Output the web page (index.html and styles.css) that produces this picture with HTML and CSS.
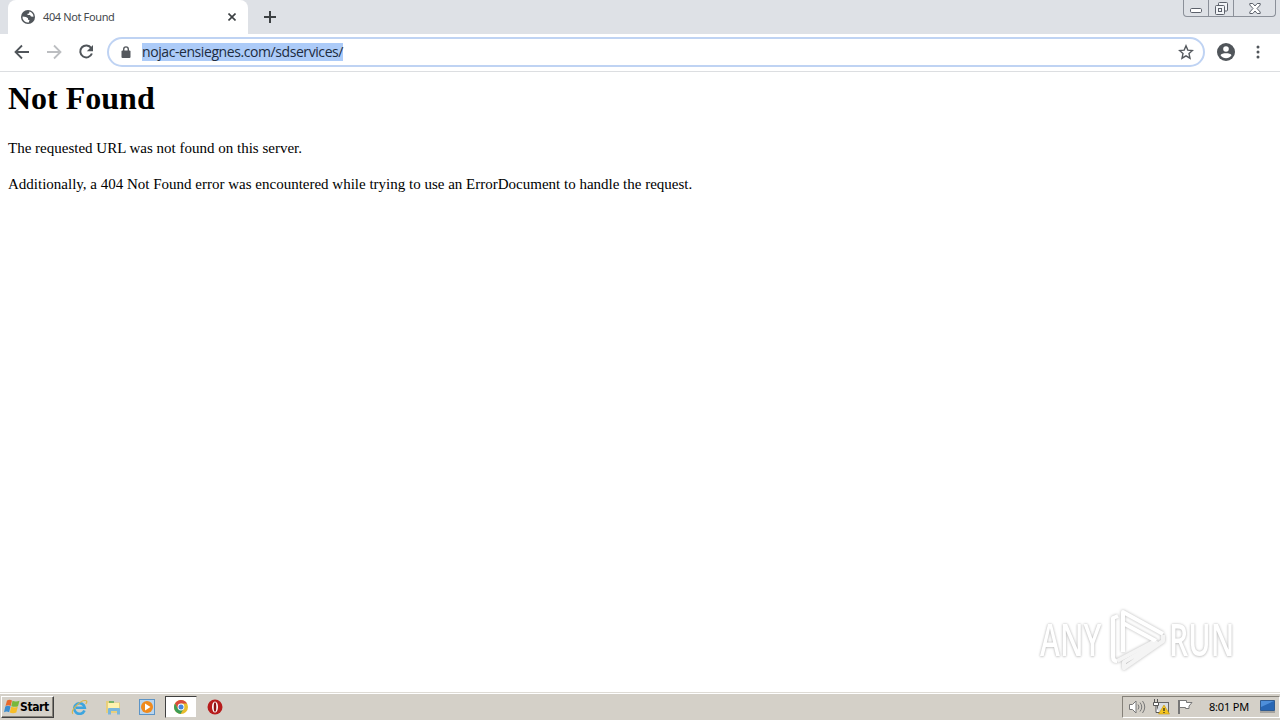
FILE: index.html
```html
<!DOCTYPE html>
<html lang="en">
<head>
    <meta charset="UTF-8">
    <title>404 Not Found</title>
    <link rel="stylesheet" href="styles.css">
</head>
<body>
    <div class="tabstrip">
        <div class="tab">
            <svg class="globe" width="14" height="14" viewBox="0 0 14 14">
                <circle cx="7" cy="7" r="7" fill="#50555a"/>
                <path d="M8.500 1.600Q12.300 2.800 12.500 6.700L10 6.500 9 5H6.500V3.800L8 3.400z" fill="#fff"/>
                <path d="M1.600 6.500L5 7l2 1.200v1.500L8.500 10l-.7 2.400Q3.500 12.900 1.600 8.500z" fill="#fff"/>
            </svg>
            <span class="tab-title">404 Not Found</span>
            <svg class="tab-close" width="8" height="8" viewBox="0 0 8 8"><path d="M.5.5l7 7M7.5.5l-7 7" stroke="#3c4043" stroke-width="1.6"/></svg>
        </div>
        <svg class="new-tab" width="12" height="12" viewBox="0 0 12 12"><path d="M6 0v12M0 6h12" stroke="#3c4043" stroke-width="2"/></svg>
        <div class="window-buttons">
            <span class="win-btn minimize"><svg width="12" height="5" viewBox="0 0 12 5"><rect x=".5" y=".5" width="11" height="4" rx="1.2" fill="#fff" stroke="#5c616b"/></svg></span>
            <span class="win-btn restore"><svg width="13" height="13" viewBox="0 0 13 13" fill="#f2f4f7" stroke="#5c616b"><rect x="3.5" y=".5" width="9" height="8.500" rx="1"/><rect x=".5" y="3.500" width="9" height="9" rx="1"/><rect x="3.500" y="6.500" width="3" height="3"/></svg></span>
            <span class="win-btn close"><svg width="12" height="11" viewBox="0 0 12 11"><path d="M.8.5h3L6 3 8.200.5h3v1.500L8 5.500l3.200 3.500v1.500h-3L6 8 3.800 10.500h-3V9L4 5.500.8 2z" fill="#fff" stroke="#5c616b"/></svg></span>
        </div>
    </div>

    <div class="toolbar">
        <svg class="nav" width="16" height="16" viewBox="0 0 16 16"><path d="M15 8H2M8 1.500L1.500 8 8 14.500" fill="none" stroke="#50555a" stroke-width="1.800"/></svg>
        <svg class="nav" width="16" height="16" viewBox="0 0 16 16"><path d="M1 8h13M8 1.500L14.500 8 8 14.500" fill="none" stroke="#bcbec1" stroke-width="1.800"/></svg>
        <svg class="nav" width="16" height="16" viewBox="0 0 16 16"><path d="M13.200 4A6 6 0 1 0 13.900 9.500" fill="none" stroke="#50555a" stroke-width="2"/><path d="M15 1v6.200H8.800z" fill="#50555a"/></svg>
        <div class="omnibox">
            <svg class="lock" width="10" height="12" viewBox="0 0 10 12"><path d="M2.700 5V3.200a2.300 2.300 0 0 1 4.600 0V5" fill="none" stroke="#55595e" stroke-width="1.400"/><rect x=".5" y="4.500" width="9" height="7.500" rx="1" fill="#55595e"/></svg>
            <span class="url">nojac-ensiegnes.com/sdservices/</span>
            <svg class="star" width="16" height="16" viewBox="0 0 16 16"><path d="M8 1.800l1.800 4.300 4.700.4-3.500 3.100 1 4.600L8 11.800l-4 2.400 1-4.600L1.500 6.500l4.700-.4z" fill="none" stroke="#55595e" stroke-width="1.400"/></svg>
        </div>
        <svg class="avatar" width="18" height="18" viewBox="0 0 18 18"><circle cx="9" cy="9" r="9" fill="#50555a"/><circle cx="9" cy="6" r="2.800" fill="#fff"/><path d="M3.500 12.300C4.500 9.700 13.500 9.700 14.500 12.300 12 16.300 6 16.300 3.500 12.300z" fill="#fff"/></svg>
        <svg class="menu" width="4" height="14" viewBox="0 0 4 14" fill="#50555a"><circle cx="2" cy="2" r="1.500"/><circle cx="2" cy="7" r="1.500"/><circle cx="2" cy="12" r="1.500"/></svg>
    </div>

    <div class="page">
        <h1>Not Found</h1>
        <p>The requested URL was not found on this server.</p>
        <p>Additionally, a 404 Not Found error was encountered while trying to use an ErrorDocument to handle the request.</p>

        <div class="watermark">
            <span class="word">ANY</span>
            <svg class="play" width="64" height="66" viewBox="0 0 64 66">
                <g fill="none" stroke-width="4" stroke-linejoin="round">
                    <path d="M13 10L8 12v39q0 4 4 4" stroke="#fff"/>
                    <path d="M12 55L50 35" stroke="#f4f4f4"/>
                    <path d="M18 46V6L58 28M18 17L51 35" stroke="#fff"/>
                    <path d="M58 29v6L19 62v-6l34-20" stroke="#f4f4f4"/>
                </g>
            </svg>
            <span class="word">RUN</span>
        </div>
    </div>

    <div class="taskbar">
        <div class="start">
            <svg width="16" height="15" viewBox="0 0 16 15">
                <path d="M3 1.500Q5.500 0 8 1.500L6.700 6.900Q4 5.700 1.500 7z" fill="#e8692c"/>
                <path d="M8.500 1.800Q12 3.200 15.500 1.700L14 7.200Q11 8.300 7.300 7.200z" fill="#78b83b"/>
                <path d="M1.300 7.500Q4 6.200 6.600 7.500L5.100 13.200Q2.500 12 0 13.300z" fill="#3b8dd0"/>
                <path d="M7.200 7.700Q10.400 9 13.800 7.800L12.300 13.500Q9 14.900 5.800 13.500z" fill="#f7bd27"/>
            </svg>
            <span>Start</span>
        </div>
        <div class="launchers">
            <span class="launcher">
                <svg width="17" height="16" viewBox="0 0 17 16"><path d="M13.500 11.500A5.300 5.300 0 1 1 13.800 8.700H5" fill="none" stroke="#3da5df" stroke-width="2.600"/><path d="M2 14.800C-1 12 9 1 14.500 1.500Q17 2 14.800 5" fill="none" stroke="#d9b74c" stroke-width="1.200"/></svg>
            </span>
            <span class="launcher">
                <svg width="17" height="16" viewBox="0 0 17 16"><path d="M1 2h5l1 1.500h8V14H1z" fill="#e8cf7c"/><path d="M3 4h11v7H3z" fill="#fff2ae"/><path d="M4 3h5" stroke="#54a858" stroke-width="1.500"/><path d="M3 15.500V10q0-1 1-1h10q1 0 1 1v5.500h-3V12H6v3.500z" fill="#79b6dc"/></svg>
            </span>
            <span class="launcher">
                <svg width="16" height="16" viewBox="0 0 16 16"><rect x=".5" y=".5" width="15" height="15" fill="#b9d5ee" stroke="#5c94c6"/><circle cx="8" cy="8" r="6" fill="#f08a1c"/><path d="M6 4.500v7L11.500 8z" fill="#fff"/></svg>
            </span>
            <span class="launcher active">
                <svg width="14" height="14" viewBox="0 0 14 14"><circle cx="7" cy="7" r="7" fill="#e8bd2d"/><path d="M1 3.500A7 7 0 0 1 13 3.500H7L4 9z" fill="#d94b3c"/><path d="M1 3.500A7 7 0 0 0 6.500 14L9.500 9 4 9z" fill="#3c9c56"/><circle cx="7" cy="7" r="3.400" fill="#fff"/><circle cx="7" cy="7" r="2.500" fill="#4585dc"/></svg>
            </span>
            <span class="launcher">
                <svg width="16" height="16" viewBox="0 0 16 16"><circle cx="8" cy="8" r="7.500" fill="#b71c1c"/><ellipse cx="8" cy="8" rx="3" ry="5.500" fill="#fff"/><ellipse cx="8" cy="8" rx="1.300" ry="4.800" fill="#8d1212"/></svg>
            </span>
        </div>
        <div class="tray">
            <svg width="17" height="16" viewBox="0 0 17 16" fill="none" stroke="#777"><path d="M.5 5.500h3L7 2v12L3.500 10.500h-3z" fill="#fff"/><path d="M9 5.500q2 2.500 0 5M11 3.500q3.500 4.500 0 9M13.500 2q4.500 6 0 12"/></svg>
            <svg width="17" height="16" viewBox="0 0 17 16"><rect x="4.500" y="3.500" width="11" height="10" fill="#d8dce0" stroke="#666"/><path d="M1.500 0v3M4.500 0v3M.5 3.500h5v3h-5zM3 6.500v7h3" fill="#fff" stroke="#555"/><path d="M11 6l5.500 9h-11z" fill="#f5c51d" stroke="#c39612" stroke-width=".6"/><path d="M11 9v3M11 13v1" stroke="#222" stroke-width="1.200"/></svg>
            <svg width="17" height="16" viewBox="0 0 17 16"><path d="M2.500 1.500h7v2h5.500l-3 3.500v2.500H8.500v-1h-6z" fill="#fff" stroke="#777"/><path d="M2 1v14" stroke="#777" stroke-width="2"/></svg>
            <span class="clock">8:01 PM</span>
            <svg class="desktop" width="15" height="13" viewBox="0 0 15 13"><path d="M.5.500h14v10H.5z" fill="#2867b5" stroke="#315c91"/><path d="M1 1h13L1 7z" fill="#4e8fda"/><path d="M0 12h15" stroke="#777"/></svg>
        </div>
    </div>
</body>
</html>
```
FILE: styles.css
```css
body {
    display: flex;
    flex-direction: column;
    height: 720px;
    margin: 0;
    background: #fff;
    overflow: hidden;
}

svg {
    display: block;
    flex: none;
}

.tabstrip {
    display: flex;
    height: 34px;
    background: #dee1e6;
}

.tab {
    display: flex;
    align-items: center;
    box-sizing: border-box;
    width: 240px;
    margin-left: 8px;
    padding: 0 12px 0 13px;
    background: #fff;
    border-radius: 8px 8px 0 0;
}

.tab-title {
    flex: 1;
    margin: -2px 0 0 8px;
    font: 11px "Noto Sans", sans-serif;
    letter-spacing: -0.37px;
    color: #45494d;
}

.new-tab {
    margin: 11px 0 0 16px;
}

.window-buttons {
    display: flex;
    box-sizing: border-box;
    width: 93px;
    height: 17px;
    margin-left: auto;
    margin-right: 4px;
    border: 1px solid #8b9099;
    border-top: 0;
    border-radius: 0 0 4px 4px;
}

.win-btn {
    display: flex;
    justify-content: center;
    width: 24px;
}

.win-btn + .win-btn {
    border-left: 1px solid #8b9099;
}

.minimize {
    padding-top: 8px;
}

.restore {
    padding-top: 2px;
}

.close {
    flex: 1;
    padding-top: 3px;
}

.toolbar {
    display: flex;
    align-items: center;
    box-sizing: border-box;
    height: 38px;
    padding: 0 20px 2px 14px;
    border-bottom: 1px solid #dcdee1;
}

.nav {
    margin-right: 16px;
}

.omnibox {
    display: flex;
    flex: 1;
    align-items: center;
    box-sizing: border-box;
    height: 30px;
    margin-left: -3px;
    padding: 0 9px 0 12px;
    border: 2px solid #bfd3f3;
    border-radius: 15px;
}

.url {
    height: 18px;
    margin: 0 auto 0 11px;
    background: #accbf8;
    font: 14px/17px "Open Sans", sans-serif;
    letter-spacing: -0.42px;
    color: #202c40;
}

.avatar {
    margin: 0 21px 0 12px;
}

.page {
    position: relative;
    flex: 1;
    padding: 8px;
    font-family: "Liberation Serif", serif;
    font-size: 15px;
    color: #000;
}

.page h1 {
    margin: 0 0 22px;
    font-size: 32px;
    line-height: 37px;
}

.page p {
    width: max-content;
    margin: 0 0 18px;
    line-height: 18px;
}

.watermark {
    position: absolute;
    right: 46px;
    bottom: 20px;
    display: flex;
    align-items: center;
}

.play {
    filter: drop-shadow(0 0 1.5px #b5b5b5);
}

.word {
    width: 65px;
    font: 600 45px/50px "Open Sans", sans-serif;
    color: #fff;
    text-shadow: 0 0 3px #b5b5b5, 0 1px 3px #ddd;
    transform: scaleX(0.67);
    transform-origin: left;
}

.taskbar {
    display: flex;
    align-items: center;
    box-sizing: border-box;
    height: 28px;
    padding: 1px 0 1px 1px;
    background: #d4d0c8;
    border-top: 1px solid #dedbd5;
    box-shadow: inset 0 1px #fff;
}

.start {
    display: flex;
    align-items: center;
    box-sizing: border-box;
    width: 53px;
    height: 22px;
    padding-left: 2px;
    border: 1px solid;
    border-color: #fff #404040 #404040 #fff;
    box-shadow: inset -1px -1px #858179;
    font: bold 12px "DejaVu Sans Condensed", sans-serif;
    letter-spacing: -0.4px;
    color: #000;
}

.launchers {
    display: flex;
    margin-left: 9px;
}

.launcher {
    display: flex;
    align-items: center;
    justify-content: center;
    box-sizing: border-box;
    width: 32px;
    height: 22px;
    margin-right: 2px;
}

.active {
    background: #fff;
    border: 1px solid;
    border-color: #404040 #d4d0c8 #d4d0c8 #404040;
}

.tray {
    display: flex;
    align-items: center;
    gap: 7px;
    box-sizing: border-box;
    width: 158px;
    height: 22px;
    margin-left: auto;
    padding-left: 6px;
    border: 1px solid;
    border-color: #858179 #fff #fff #858179;
}

.clock {
    margin-left: 8px;
    font: 11px "Noto Sans", sans-serif;
    letter-spacing: -0.2px;
    white-space: nowrap;
    color: #000;
}

.desktop {
    margin-left: 4px;
}
```
